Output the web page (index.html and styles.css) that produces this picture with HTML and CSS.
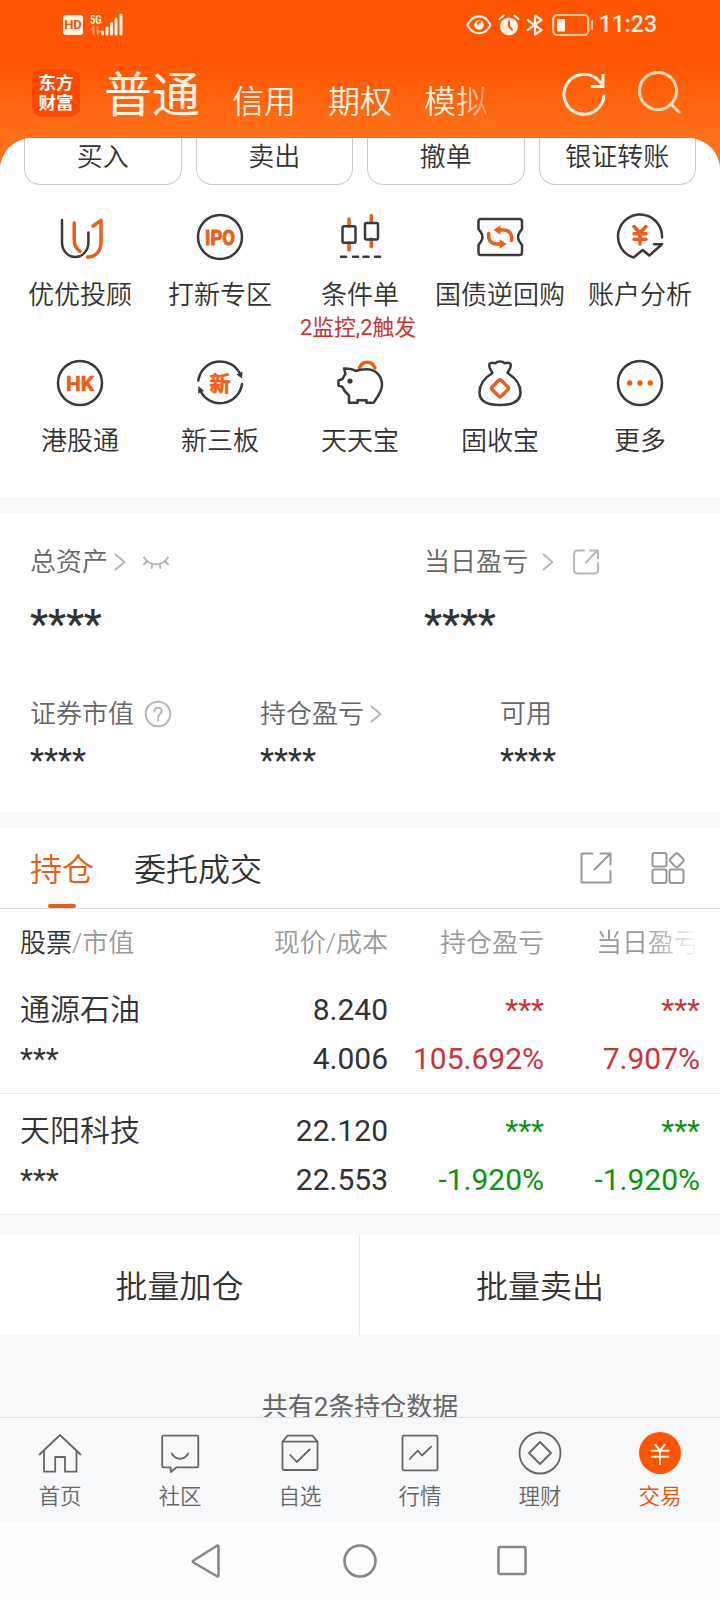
FILE: index.html
```
<!DOCTYPE html>
<html lang="zh-CN">
  <head>
    <meta charset="UTF-8" />
    <meta name="viewport" content="width=device-width, initial-scale=1.0" />
    <title>交易</title>
    <link rel="stylesheet" href="styles.css">
  </head>
  <body>
    <div class="app">
      <header class="header">
        <div class="status-bar">
          <div class="status-left">
            <span class="hd">HD</span>
            <svg class="signal" width="34" height="24" viewBox="0 0 34 24">
              <text x="0" y="10.500" class="signal-text" textLength="11.500" lengthAdjust="spacingAndGlyphs">5G</text>
              <path class="dim" d="M3.500 20.500v-6.500l-2.500 2.500M7.500 14v6.500l2.500-2.500" />
              <path d="M12.500 19v2M17 15v6M21.500 10.500V21M26 6v15M31 2v19" />
            </svg>
          </div>
          <div class="status-right">
            <svg width="26" height="22" viewBox="0 0 26 22" class="line">
              <path d="M1.500 11C7 -0.500 19 -0.500 24.500 11C19 22 7 22 1.500 11z" />
              <circle cx="13" cy="11" r="4.800" class="solid" />
              <path d="M12 10a2 2 0 0 1 2-2" class="orange-line" />
            </svg>
            <svg width="22" height="22" viewBox="0 0 22 22" class="line">
              <circle cx="11" cy="12.500" r="9" class="solid" />
              <path d="M1.500 5l4-3.500M20.500 5l-4-3.500" />
              <path d="M11 7.500v5l3 3" class="orange-line" />
            </svg>
            <svg width="18" height="22" viewBox="0 0 18 22" class="line">
              <path d="M1.500 6l14 10-6.500 4.500v-19l6.500 4.500-14 10" />
            </svg>
            <svg width="41" height="22" viewBox="0 0 41 22" class="line battery">
              <rect x="1.200" y="1" width="35" height="20" rx="4" />
              <rect x="5" y="5" width="8" height="12.500" rx="1" class="solid" />
              <path d="M40 7v8" />
            </svg>
            <span class="time">11:23</span>
          </div>
        </div>
        <div class="nav">
          <div class="logo"><span>东方</span><span>财富</span></div>
          <div class="nav-tabs">
            <span class="nav-tab active">普通</span>
            <span class="nav-tab">信用</span>
            <span class="nav-tab">期权</span>
            <span class="nav-tab faded">模拟</span>
          </div>
          <svg class="refresh" width="48" height="48" viewBox="0 0 48 48">
            <path d="M44 25.500A20 20 0 1 1 38.500 11.500L43 16M43 5v12.500H30.500" />
          </svg>
          <svg class="search" width="48" height="48" viewBox="0 0 48 48">
            <circle cx="22" cy="22" r="18.500" />
            <path d="M35 35l9 9" />
          </svg>
        </div>
      </header>

      <main class="content">
        <section class="quick">
          <div class="quick-btn">买入</div>
          <div class="quick-btn">卖出</div>
          <div class="quick-btn">撤单</div>
          <div class="quick-btn">银证转账</div>
        </section>

        <section class="menu">
          <div class="menu-item">
            <svg viewBox="0 0 48 48">
              <path d="M6 7v22.500a13.200 14.500 0 0 0 26.400 0V19.500" />
              <path class="o" d="M18.200 10v17c0 5 2 8.500 5.800 11.500M37 13l8-5.500v21.500c0 9-5 15-13.500 15" />
            </svg>
            <span>优优投顾</span>
          </div>
          <div class="menu-item">
            <svg viewBox="0 0 48 48">
              <circle cx="24" cy="24" r="22" />
              <text x="24" y="31.500" class="ipo" textLength="30" lengthAdjust="spacingAndGlyphs">IPO</text>
            </svg>
            <span>打新专区</span>
          </div>
          <div class="menu-item">
            <svg viewBox="0 0 48 48">
              <path class="o" d="M13 6v7M13 30v7M35.300 2.500v7M35.300 26v7.500" />
              <rect x="6.500" y="13.300" width="13" height="16.500" rx="1.500" />
              <rect x="29" y="10" width="13" height="16.500" rx="1.500" />
              <path d="M5 43.700h5M17 43.700h5M27.500 43.700h5M39 43.700h5" />
            </svg>
            <span>条件单</span>
            <em>2监控,2触发</em>
          </div>
          <div class="menu-item">
            <svg viewBox="0 0 48 48">
              <path d="M5 6h38.500q2.500 0 2.500 2.500v7.500l-2.200 3q-3.600 5 0 10l2.200 3v7.500q0 2.500-2.500 2.500H5q-2.500 0-2.500-2.500v-7.500l2.200-3q3.600-5 0-10l-2.200-3V8.500Q2.500 6 5 6z" />
              <path class="o" d="M35.500 27.500c1-6-2-10.500-8-10.500h-4M12.700 20.500c-1 6 2 10.500 8 10.500h4" />
              <path class="of" d="M17.500 17l7-4.800v9.600zM30.700 31l-7-4.800v9.600z" />
            </svg>
            <span>国债逆回购</span>
          </div>
          <div class="menu-item">
            <svg viewBox="0 0 48 48">
              <path d="M46 24.500A22 22 0 1 0 17.500 44.500L26.700 37l6.600 5.500L46 31.200h-8" />
              <path class="o" d="M18 13.500l6 6.500 6-6.500M24 20.500V31M18 20.700h12M18 26.300h12" />
            </svg>
            <span>账户分析</span>
          </div>
          <div class="menu-item">
            <svg viewBox="0 0 48 48">
              <circle cx="24" cy="24" r="22" />
              <text x="24" y="31.500" class="hk" textLength="28" lengthAdjust="spacingAndGlyphs">HK</text>
            </svg>
            <span>港股通</span>
          </div>
          <div class="menu-item">
            <svg viewBox="0 0 48 48">
              <path d="M2.300 21.500A22 22 0 0 1 44 15M46 25A22 22 0 0 1 4.500 32" />
              <path class="df" d="M40.500 15.500l6-3-.500 7zM2 34.500l.500-7.500 5.500 5z" />
              <text x="24" y="31.500" class="xin">新</text>
            </svg>
            <span>新三板</span>
          </div>
          <div class="menu-item">
            <svg viewBox="0 0 48 48">
              <path class="o" d="M23.500 8.500C27 1.500 36 1.500 39 9" />
              <path d="M8 9.500c4 0 8 0 11.500 2.500 3-1.200 6.500-1.700 11-1.700C40 10.300 46 17 46 26c0 6-4 11-8.500 17.800h-7v-2.600h-9v2.600h-8.500v-7.300C10 34 7.500 31 6.300 27.800L2.500 26.500v-5l4-1.500c.700-2 2-3.700 3-5z" />
              <circle cx="14" cy="22" r="2.600" class="df" />
            </svg>
            <span>天天宝</span>
          </div>
          <div class="menu-item">
            <svg viewBox="0 0 48 48">
              <path d="M16.500 14C15 11 12 8 13.500 5c1.300-2 4-1.300 6-.800 1.800-2.300 7.200-2.300 9 0 2-.500 4.700-1.200 6 .800 1.500 3-1.500 6-3 9 7.500 4.500 13 11 13 19.500 0 9-7 12.500-20.500 12.500S3.500 42.500 3.500 33.500c0-8.500 5.500-15 13-19.500z" />
              <rect x="17.500" y="22.800" width="13" height="13" rx="2" class="o" transform="rotate(45 24 29.300)" />
            </svg>
            <span>固收宝</span>
          </div>
          <div class="menu-item">
            <svg viewBox="0 0 48 48">
              <circle cx="24" cy="24" r="22" />
              <path class="of" d="M11 24a2.700 2.700 0 1 1 5.400 0a2.700 2.700 0 1 1-5.400 0zM21.300 24a2.700 2.700 0 1 1 5.400 0a2.700 2.700 0 1 1-5.400 0zM31.600 24a2.700 2.700 0 1 1 5.400 0a2.700 2.700 0 1 1-5.400 0z" />
            </svg>
            <span>更多</span>
          </div>
        </section>

        <section class="assets">
          <div class="asset-row main-row">
            <div class="asset">
              <div class="asset-label">
                总资产
                <svg class="chev" width="12" height="18" viewBox="0 0 12 18"><path d="M1.500 1.500L10.500 9l-9 7.500" /></svg>
                <svg class="eye" width="28" height="14" viewBox="0 0 28 14">
                  <path d="M2 2.500c6 9 18 9 24 0M5 6l-3 3.500M10.500 9L9.500 13M17.500 9l1 4M23 6l3 3.500" />
                </svg>
              </div>
              <div class="asset-value">****</div>
            </div>
            <div class="asset">
              <div class="asset-label">
                当日盈亏
                <svg class="chev wide" width="12" height="18" viewBox="0 0 12 18"><path d="M1.500 1.500L10.500 9l-9 7.500" /></svg>
                <svg class="share" width="28" height="28" viewBox="0 0 28 28">
                  <path d="M12 2.500H6Q2 2.500 2 6.500v15q0 4 4 4h16q4 0 4-4V15M14 14.500L25 3M18 2.500h8v8" />
                </svg>
              </div>
              <div class="asset-value">****</div>
            </div>
          </div>
          <div class="asset-row sub-row">
            <div class="asset">
              <div class="asset-label">
                证券市值
                <svg class="help" width="28" height="28" viewBox="0 0 28 28">
                  <circle cx="14" cy="14" r="12.300" />
                  <path d="M10.500 11.500c0-5 7.200-5 7.200-.500 0 3-3.600 3-3.600 6.500M14.100 19.500v1" />
                </svg>
              </div>
              <div class="asset-value">****</div>
            </div>
            <div class="asset">
              <div class="asset-label">
                持仓盈亏
                <svg class="chev" width="12" height="18" viewBox="0 0 12 18"><path d="M1.500 1.500L10.500 9l-9 7.500" /></svg>
              </div>
              <div class="asset-value">****</div>
            </div>
            <div class="asset">
              <div class="asset-label">可用</div>
              <div class="asset-value">****</div>
            </div>
          </div>
        </section>

        <section class="holdings">
          <div class="tabs">
            <span class="tab active">持仓</span>
            <span class="tab">委托成交</span>
            <div class="tools">
              <svg width="32" height="32" viewBox="0 0 32 32">
                <path d="M12.500 1.500H2q-.500 0-.500.500v28q0 .500.500.500h28q.500 0 .500-.500V19M14.500 17.500L30 2M20.500 1.500h10v11" />
              </svg>
              <svg width="34" height="34" viewBox="0 0 34 34">
                <rect x="1.500" y="2" width="14" height="13.500" rx="2" />
                <rect x="1.500" y="18.500" width="14" height="13.500" rx="2" />
                <rect x="18.500" y="18.500" width="14" height="13.500" rx="2" />
                <rect x="20.300" y="3.800" width="11" height="11" rx="2.500" transform="rotate(45 25.800 9.300)" />
              </svg>
            </div>
          </div>
          <div class="row head">
            <span><b>股票</b>/市值</span>
            <span>现价/成本</span>
            <span>持仓盈亏</span>
            <span class="head-fade">当日盈亏</span>
          </div>
          <div class="row stock">
            <span>通源石油</span>
            <span>8.240</span>
            <span class="up">***</span>
            <span class="up">***</span>
            <span>***</span>
            <span>4.006</span>
            <span class="up">105.692%</span>
            <span class="up">7.907%</span>
          </div>
          <div class="row stock">
            <span>天阳科技</span>
            <span>22.120</span>
            <span class="down">***</span>
            <span class="down">***</span>
            <span>***</span>
            <span>22.553</span>
            <span class="down">-1.920%</span>
            <span class="down">-1.920%</span>
          </div>
        </section>

        <section class="batch">
          <div>批量加仓</div>
          <div>批量卖出</div>
        </section>
        <p class="total">共有2条持仓数据</p>
      </main>

      <nav class="tabbar">
        <div class="tabbar-item">
          <svg viewBox="0 0 48 48"><path d="M3.500 25.500L24 6l20.500 19.500M8 21.500v21.200h11.200V28h9.800v14.700H40.500V21.500" /></svg>
          <span>首页</span>
        </div>
        <div class="tabbar-item">
          <svg viewBox="0 0 48 48"><path d="M7.500 6.700h33.500q1.300 0 1.300 1.300v29q0 1.300-1.300 1.300H20.700l-6 4.700v-4.700H7.500q-1.300 0-1.300-1.300V8q0-1.300 1.300-1.300zM15.700 24.500c4 7 12.600 7 16.600 0" /></svg>
          <span>社区</span>
        </div>
        <div class="tabbar-item">
          <svg viewBox="0 0 48 48"><path d="M6.500 12.700V39.500q0 1.500 1.500 1.500h32q1.500 0 1.500-1.500V12.700l-5-6h-25zM6.500 12.700h35M14.200 26l6.600 7L33.700 20.500" /></svg>
          <span>自选</span>
        </div>
        <div class="tabbar-item">
          <svg viewBox="0 0 48 48"><path d="M8 6.700h32q1.500 0 1.500 1.500v31.600q0 1.500-1.500 1.500H8q-1.500 0-1.500-1.500V8.200q0-1.500 1.500-1.500zM13.700 30l8-8.300 4.300 4.800 9.300-8.800" /></svg>
          <span>行情</span>
        </div>
        <div class="tabbar-item">
          <svg viewBox="0 0 48 48"><circle cx="24" cy="24" r="20.500" /><path d="M24 13l11 11-11 11-11-11z" /></svg>
          <span>理财</span>
        </div>
        <div class="tabbar-item active">
          <svg viewBox="0 0 48 48">
            <circle cx="24" cy="24" r="21" />
            <path d="M19 15.500l5 6 5-6M24 21.500V35M15.500 21.700h17M15.500 27.700h17" />
          </svg>
          <span>交易</span>
        </div>
      </nav>

      <div class="system-nav">
        <svg width="36" height="36" viewBox="0 0 36 36"><path d="M29.500 4v28q0 2-2 1L4.500 19.500q-1.500-1 0-2L27.500 3q2-1 2 1z" /></svg>
        <svg width="36" height="36" viewBox="0 0 36 36"><circle cx="18" cy="18" r="15.500" /></svg>
        <svg width="36" height="36" viewBox="0 0 36 36"><rect x="3.500" y="4" width="27" height="27" rx="1.500" /></svg>
      </div>
    </div>
  </body>
</html>
```
FILE: styles.css
```
* {
  box-sizing: border-box;
}

body {
  margin: 0;
  background-color: #f7f8fa;
  font-family: Roboto, "Noto Sans CJK SC", sans-serif;
  font-weight: 350;
  color: #333;
}

svg {
  display: block;
  flex: none;
  fill: none;
  stroke-linecap: round;
  stroke-linejoin: round;
}

.app {
  width: 720px;
  height: 1600px;
  display: flex;
  flex-direction: column;
  overflow: hidden;
  background: linear-gradient(#ff5500 0, #ff5500 58px, #ff7019 138px, #ff7019 180px, #f7f8fa 180px);
}

/* header */
.header {
  height: 138px;
  flex: none;
  color: #fff3e6;
}

.status-bar {
  display: flex;
  justify-content: space-between;
  height: 48px;
  padding: 1px 63px 0;
  align-items: center;
}

.status-left,
.status-right {
  display: flex;
  align-items: center;
}

.status-left {
  gap: 7px;
}

.status-right {
  gap: 6px;
}

.hd {
  width: 20px;
  height: 20px;
  border-radius: 3px;
  background-color: #fff3e6;
  color: #ff5500;
  font-size: 13px;
  font-weight: 700;
  line-height: 20px;
  text-align: center;
}

.signal {
  stroke: #fff3e6;
  stroke-width: 3;
}

.signal .dim {
  stroke-width: 2;
  opacity: 0.4;
}

.signal-text {
  font: 700 12.500px Roboto, sans-serif;
  fill: #fff3e6;
  stroke: none;
}

.line {
  stroke: #fff3e6;
  stroke-width: 2.2;
}

.line .solid {
  fill: #fff3e6;
  stroke: none;
}

.line .orange-line {
  stroke: #ff5500;
  stroke-width: 2;
}

.battery {
  margin-left: 2px;
  stroke: #ffc9a3;
}

.time {
  font-size: 23px;
  font-weight: 500;
  line-height: 24px;
}

.nav {
  display: flex;
  height: 90px;
  padding-left: 32px;
}

.logo {
  display: flex;
  flex-direction: column;
  justify-content: center;
  width: 48px;
  height: 48px;
  margin: 21px 24px 0 0;
  border-radius: 10px;
  background-color: #ff4800;
  color: #fff;
  font-size: 17.500px;
  font-weight: 700;
  line-height: 20px;
  text-align: center;
}

.nav-tabs {
  display: flex;
  align-items: flex-start;
  width: 456px;
  gap: 32px;
}

.nav-tab {
  margin-top: 9px;
  font-size: 32px;
  line-height: 90px;
}

.nav-tab.active {
  margin-top: 3px;
  font-size: 48px;
  font-weight: 400;
}

.nav-tab.faded {
  -webkit-mask-image: linear-gradient(90deg, #000 50%, transparent 125%);
  mask-image: linear-gradient(90deg, #000 50%, transparent 125%);
}

.refresh,
.search {
  margin-top: 21px;
  stroke: #fff3e6;
  stroke-width: 3;
  stroke-linecap: butt;
  stroke-linejoin: miter;
}

.search {
  margin-left: 28px;
  stroke: #ffdcc0;
}

/* shortcuts */
.content {
  flex: 1;
  min-height: 0;
  overflow: hidden;
  border-radius: 32px 32px 0 0;
  background-color: #f7f8fa;
}

.quick {
  display: grid;
  grid-template-columns: repeat(4, 1fr);
  gap: 14px;
  height: 47px;
  padding: 0 24px;
  background-color: #fff;
}

.quick-btn {
  border: 1px solid #ccc;
  border-top: none;
  border-radius: 0 0 16px 16px;
  font-size: 26px;
  line-height: 39px;
  text-align: center;
}

.menu {
  display: grid;
  grid-template-columns: repeat(5, 140px);
  grid-template-rows: 146px 146px;
  justify-content: center;
  height: 312px;
  padding-top: 28px;
  background-color: #fff;
}

.menu-item {
  display: flex;
  flex-direction: column;
  align-items: center;
  font-size: 26px;
  line-height: 36px;
}

.menu-item svg {
  width: 48px;
  height: 48px;
  margin-bottom: 16px;
  stroke: #3a3a3c;
  stroke-width: 2.500;
}

.menu-item span {
  white-space: nowrap;
}

.menu-item em {
  margin-right: 4px;
  color: #c93434;
  font-size: 21.800px;
  font-style: normal;
  font-weight: 400;
  line-height: 30px;
}

.menu-item .o {
  stroke: #ee5e17;
  stroke-width: 3.500;
}

.menu-item .of {
  fill: #ee5e17;
  stroke: none;
}

.menu-item .df {
  fill: #3a3a3c;
  stroke: none;
}

.menu-item text {
  fill: #ee5e17;
  stroke: #ee5e17;
  stroke-width: 0.600;
  font-size: 21px;
  font-weight: 700;
  text-anchor: middle;
}

.menu-item .ipo {
  stroke-width: 1;
}

/* assets */
.assets {
  height: 299px;
  margin-top: 16px;
  padding: 31px 30px 0;
  background-color: #fff;
  line-height: 36px;
}

.asset-row {
  display: grid;
}

.main-row {
  grid-template-columns: 394px 1fr;
  height: 152px;
}

.sub-row {
  grid-template-columns: 230px 240px 1fr;
}

.asset-label {
  display: flex;
  align-items: center;
  height: 36px;
  color: #666;
  font-size: 26px;
}

.asset-label svg {
  stroke: #b8b8b8;
  stroke-width: 2;
}

.chev {
  margin-left: 6px;
}

.chev.wide {
  margin-left: 14px;
}

.eye {
  margin-left: 16px;
}

.share {
  margin-left: 18px;
}

.help {
  margin-left: 10px;
}

.asset-value {
  font-size: 32.500px;
  font-weight: 400;
  margin-top: 11px;
}

.main-row .asset-value {
  font-size: 40.500px;
  font-weight: 500;
  margin-top: 26px;
}

/* holdings */
.holdings {
  margin-top: 16px;
  background-color: #fff;
}

.tabs {
  display: flex;
  height: 81px;
  padding: 0 35px 0 30px;
  gap: 40px;
  border-bottom: 1px solid #ddd;
  font-size: 32px;
  line-height: 84px;
}

.tab.active {
  display: flex;
  flex-direction: column;
  align-items: center;
  color: #ea5b13;
}

.tab.active::after {
  content: "";
  width: 28px;
  height: 4px;
  margin-top: -8px;
  border-radius: 2px;
  background-color: #ea5b13;
}

.tools {
  display: flex;
  align-items: center;
  gap: 39px;
  margin-left: auto;
}

.tools svg {
  stroke: #999;
  stroke-width: 2;
}

.row {
  display: grid;
  grid-template-columns: 208px 160px 156px 156px;
  padding: 0 20px;
  text-align: right;
}

.row > span:nth-child(4n + 1) {
  text-align: left;
}

.head {
  height: 64px;
  color: #999;
  font-size: 26px;
  line-height: 68px;
}

.head b {
  color: #333;
  font-weight: inherit;
}

.head-fade {
  -webkit-mask-image: linear-gradient(90deg, #000 65%, transparent);
  mask-image: linear-gradient(90deg, #000 65%, transparent);
}

.stock {
  grid-template-rows: 49px 49px;
  height: 121px;
  padding-top: 12px;
  border-bottom: 1px solid #ebebeb;
  font-size: 30px;
  font-weight: 400;
  line-height: 49px;
}

.stock > span:first-child {
  font-weight: 350;
}

.up {
  color: #cc3333;
}

.down {
  color: #0a960a;
}

/* batch actions */
.batch {
  display: grid;
  grid-template-columns: 1fr 1fr;
  height: 100px;
  margin-top: 20px;
  overflow: hidden;
  background-color: #fff;
  font-size: 32px;
  line-height: 105px;
  text-align: center;
}

.batch div:first-child {
  border-right: 1px solid #e8e8e8;
}

.total {
  margin: 56px 0 0;
  color: #666;
  font-size: 26px;
  font-weight: 400;
  line-height: 32px;
  text-align: center;
}

/* bottom bars */
.tabbar {
  display: grid;
  grid-template-columns: repeat(6, 1fr);
  flex: none;
  height: 105px;
  border-top: 1px solid #e0e0e3;
  background-color: #f7f8fa;
}

.tabbar-item {
  display: flex;
  flex-direction: column;
  align-items: center;
  padding-top: 11px;
  color: #666;
  font-size: 21.500px;
  line-height: 30px;
}

.tabbar-item svg {
  width: 48px;
  height: 48px;
  margin-bottom: 5px;
  stroke: #666;
  stroke-width: 1.800;
}

.tabbar-item.active {
  color: #e8540c;
}

.tabbar-item.active circle {
  fill: #ff5500;
  stroke: none;
}

.tabbar-item.active path {
  stroke: #fff0e0;
  stroke-width: 2;
}

.system-nav {
  display: flex;
  justify-content: center;
  align-items: center;
  gap: 117px;
  flex: none;
  height: 78px;
  background-color: #fcfcfc;
}

.system-nav svg {
  stroke: #888;
  stroke-width: 2.600;
}
```
